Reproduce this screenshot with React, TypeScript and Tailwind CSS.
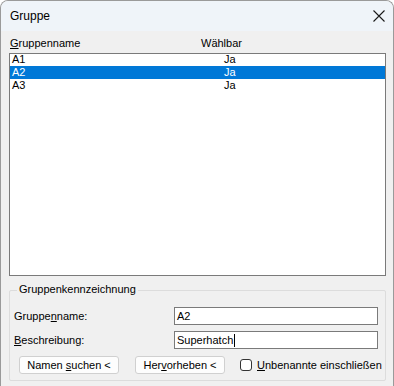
import { useState } from 'react';

const ROWS = [
  { name: 'A1', sel: 'Ja' },
  { name: 'A2', sel: 'Ja' },
  { name: 'A3', sel: 'Ja' },
];

function CloseIcon() {
  return (
    <svg width="12" height="12" viewBox="0 0 12 12" className="block">
      <path d="M0.5 0.5 L11.5 11.5 M11.5 0.5 L0.5 11.5" stroke="#1a1a1a" strokeWidth="1.1" fill="none" />
    </svg>
  );
}

export default function App() {
  const [active, setActive] = useState(1);

  return (
    <div
      className="flex h-[386px] w-[394px] flex-col overflow-hidden rounded-t-[8px] border border-b-0 border-[#9a9a9a] bg-[#f0f0f0] text-[11px] leading-none text-black"
      style={{ fontFamily: '"Liberation Sans", Arial, sans-serif' }}
    >
      {/* Title bar */}
      <div className="flex h-[30px] shrink-0 items-center justify-between bg-[#eff4f9] pr-[8px] pl-[9px]">
        <span className="text-[12px]">Gruppe</span>
        <CloseIcon />
      </div>

      {/* Column headers */}
      <div className="flex h-[22px] items-end pb-[4px] pl-[9px]">
        <span className="w-[191px]">
          <u>G</u>ruppenname
        </span>
        <span>Wählbar</span>
      </div>

      {/* List */}
      <div className="ml-[8px] h-[223px] w-[377px] border border-[#7a7a7a] bg-white">
        {ROWS.map((row, i) => (
          <div
            key={row.name}
            onClick={() => setActive(i)}
            className={`flex h-[13px] items-center pl-[2px] ${i === 0 ? 'mt-[-1px]' : ''} ${
              active === i ? 'bg-[#0078d7] text-white' : ''
            }`}
          >
            <span className="w-[212px]">{row.name}</span>
            <span>{row.sel}</span>
          </div>
        ))}
      </div>

      {/* Group box */}
      <div className="relative mt-[14px] ml-[8px] h-[91px] w-[377px] rounded-[2px] border border-[#dcdcdc]">
        <span className="absolute top-[-7px] left-[7px] bg-[#f0f0f0] px-[2px]">Gruppenkennzeichnung</span>

        <div className="mt-[16px] flex items-center">
          <span className="w-[164px] pl-[4px]">
            Gruppe<u>n</u>name:
          </span>
          <div className="flex h-[18px] w-[204px] items-center border border-[#7a7a7a] bg-white pl-[2px]">A2</div>
        </div>

        <div className="mt-[6px] flex items-center">
          <span className="w-[164px] pl-[4px]">
            <u>B</u>eschreibung:
          </span>
          <div className="flex h-[18px] w-[204px] items-center border border-[#7a7a7a] bg-white pl-[2px]">
            Superhatch
            <span className="ml-[1px] inline-block h-[13px] w-px bg-black" />
          </div>
        </div>

        <div className="mt-[7px] flex items-center pl-[9px]">
          <button className="h-[18px] w-[100px] rounded-[3px] border border-[#d0d0d0] bg-[#fdfdfd] text-center">
            Namen <u>s</u>uchen &lt;
          </button>
          <button className="ml-[16px] h-[18px] w-[90px] rounded-[3px] border border-[#d0d0d0] bg-[#fdfdfd] text-center">
            Her<u>v</u>orheben &lt;
          </button>
          <label className="ml-[15px] flex items-center">
            <span className="inline-block h-[12px] w-[12px] rounded-[3px] border border-[#333] bg-white" />
            <span className="ml-[5px]">
              <u>U</u>nbenannte einschließen
            </span>
          </label>
        </div>
      </div>
    </div>
  );
}
